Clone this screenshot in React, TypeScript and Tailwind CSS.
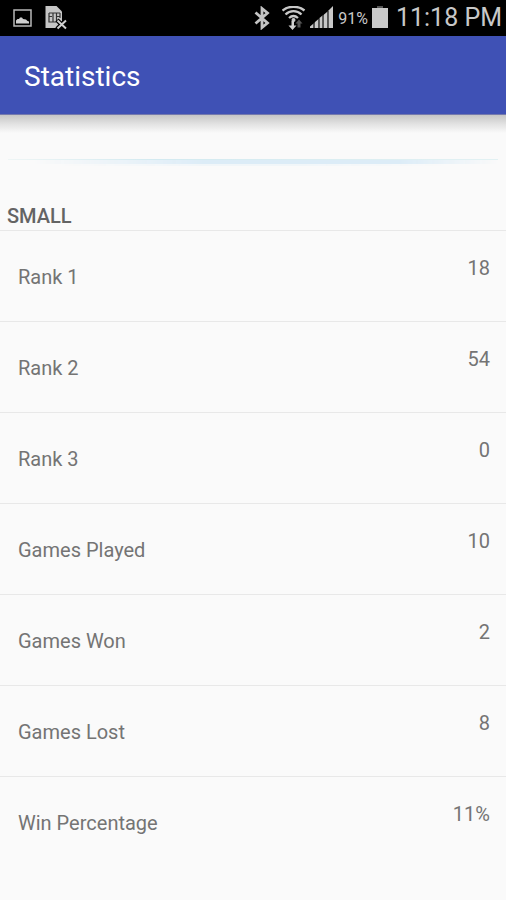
const stats = [
  { label: "Rank 1", value: "18" },
  { label: "Rank 2", value: "54" },
  { label: "Rank 3", value: "0" },
  { label: "Games Played", value: "10" },
  { label: "Games Won", value: "2" },
  { label: "Games Lost", value: "8" },
  { label: "Win Percentage", value: "11%" },
];

function PictureIcon() {
  return (
    <svg className="w-5 h-5" viewBox="0 0 20 20" fill="none">
      <rect x="2" y="2" width="17" height="16" stroke="#b8b8b8" strokeWidth="1.5" />
      <path d="M4 15.500v-3l1.500-1.500h1.500l1-1.500h2l1 1.500 3 .5 1.500 1.500 1.500.5v2z" fill="#d0d0d0" />
    </svg>
  );
}

function SimCrossIcon() {
  return (
    <svg className="w-6 h-6" viewBox="0 0 24 24" fill="none">
      <path d="M1.500 0h11l5.500 5.500v10L12 22H1.500z" fill="#c6c6c6" />
      <path d="M5 7h11M5 7v9h7M9 7v9M12.500 7v9M5 10.500h3M12.500 10.500h3M16 7v5" stroke="#333" strokeWidth="1.200" />
      <path d="M13 14l9 9M22 14l-9 9" stroke="#000" strokeWidth="4.500" />
      <path d="M13.500 14.500l8.500 8M22 14.500l-8.500 8" stroke="#d0d0d0" strokeWidth="2" />
    </svg>
  );
}

function BluetoothIcon() {
  return (
    <svg className="w-4 h-6" viewBox="0 0 16 24" fill="none">
      <path d="M1.500 6.500l12 10.500L8 21.500V2.500l5.500 4.500L1.500 17.500" stroke="#c4c4c4" strokeWidth="2.800" />
    </svg>
  );
}

function WifiIcon() {
  return (
    <svg className="w-6 h-6" viewBox="0 0 24 24" fill="none">
      <path d="M.5 4.500c6-5 16-5 22 0M3.500 8.500c4.500-4.500 11.500-4.500 16 0M7 12c2.800-2.500 6.200-2.500 9 0" stroke="#c8c8c8" strokeWidth="2.300" />
      <circle cx="11.500" cy="14" r="2" fill="#c8c8c8" />
      <path d="M9.500 15H12v4.500h2.500L10.500 24l-4-4.500h3z" fill="#d0d0d0" />
      <path d="M17 13.500l3.500 4h-2v4h-3v-4h-2z" fill="#555" />
    </svg>
  );
}

function SignalIcon() {
  return (
    <svg className="w-6 h-6" viewBox="0 0 24 24" fill="#c8c8c8">
      <path d="M0 22v-1.500l3-2.500v4z" />
      <path d="M5 22v-6l3-2.500V22z" />
      <path d="M9.500 22V12l3-2.500V22z" />
      <path d="M14 22V8.500L17 6v16z" />
      <path d="M18.500 22V4.500L23 0v22z" />
      <path d="M3 18v4h2v-6zM8 13.500V22h1.500V12zM12.500 9.500V22H14V8.500zM17 6v16h1.500V4.500z" fill="#555" />
    </svg>
  );
}

function BatteryIcon() {
  return (
    <svg className="w-4 h-6" viewBox="0 0 16 24">
      <path d="M5 0h6v2H5z" fill="#555" />
      <path d="M0 2h16v20H0z" fill="#c8c8c8" />
    </svg>
  );
}

function StatusBar() {
  return (
    <div className="h-9 bg-black pl-3 pr-1 flex items-center justify-between text-[#c8c8c8]">
      <div className="flex items-center gap-3">
        <PictureIcon />
        <SimCrossIcon />
      </div>
      <div className="flex items-center">
        <div className="flex items-center gap-3">
          <BluetoothIcon />
          <WifiIcon />
        </div>
        <div className="flex items-center gap-1 ml-1">
          <SignalIcon />
          <span className="pt-0.5 text-base">91%</span>
          <BatteryIcon />
        </div>
        <span className="ml-2 text-[25px] leading-9">11:18 PM</span>
      </div>
    </div>
  );
}

function App() {
  return (
    <div className="min-h-screen bg-[#fafafa] font-['Roboto','Liberation_Sans',sans-serif]">
      <StatusBar />
      <header className="h-[79px] bg-[#3f51b5] px-6 pt-1 flex items-center border-b border-[#7479ad]">
        <h1 className="text-[28px] leading-9 text-white">Statistics</h1>
      </header>
      <div className="h-[18px] bg-linear-to-b from-[#c6c6c6] via-[#e2e2e2] to-[#fafafa]"></div>

      <main>
        {/* thin at both ends, thicker in the middle */}
        <div className="mt-[26px] mx-2 h-[7px]">
          <div className="h-px bg-linear-to-r from-[#eef5f5] via-[#d3eaf1] to-[#e2f1f3] via-30%"></div>
          <div className="h-1 bg-[#dcecf7] mask-l-from-60% mask-l-to-95% mask-r-from-80% mask-r-to-100%"></div>
          <div className="h-0.5 bg-[#f1f6f9] mask-x-from-60% mask-x-to-90%"></div>
        </div>
        <h2 className="mt-[38px] px-[7px] h-[26px] text-xl leading-6 font-medium text-[#646464]">SMALL</h2>
        <dl>
          {stats.map((item) => (
            <div key={item.label} className="h-[91px] pl-[18px] pr-4 flex justify-between border-t border-[#e8e8e8] text-xl text-[#747474]">
              <dt className="pt-8">{item.label}</dt>
              <dd className="pt-[23px]">{item.value}</dd>
            </div>
          ))}
        </dl>
      </main>
    </div>
  );
}

export default App;
